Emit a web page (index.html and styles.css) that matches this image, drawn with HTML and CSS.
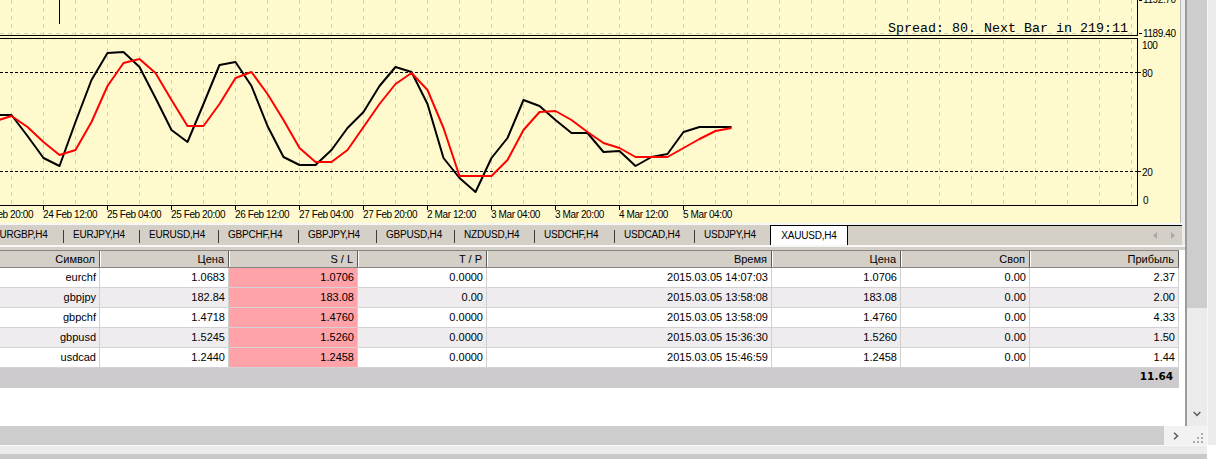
FILE: index.html
```html
<!DOCTYPE html>
<html>
<head>
<meta charset="utf-8">
<link rel="stylesheet" href="styles.css">
</head>
<body>
<div class="app">
  <div class="top">
    <div class="left">
      <div class="chart">
        <svg class="chart-svg" width="1180" height="223" viewBox="0 0 1180 223">
          <defs>
            <pattern id="vg" x="11" y="0" width="32" height="8" patternUnits="userSpaceOnUse">
              <rect x="0" y="0" width="1" height="4" fill="#d3d1c2"/>
            </pattern>
            <clipPath id="ind"><rect x="0" y="39" width="1137" height="166"/></clipPath>
          </defs>
          <rect x="0" y="0" width="1137" height="35" fill="url(#vg)"/>
          <rect x="0" y="39" width="1137" height="166" fill="url(#vg)"/>
          <path d="M0 33.5H1137" stroke="#d3d1c2" stroke-dasharray="4 4" shape-rendering="crispEdges"/>
          <path d="M59.5 0V24" stroke="#000" shape-rendering="crispEdges"/>
          <path d="M0 35.5H1137.5V0" stroke="#000" fill="none" shape-rendering="crispEdges"/>
          <path d="M0 38.5H1137.5V205.5H0" stroke="#000" fill="none" shape-rendering="crispEdges"/>
          <path d="M0 72.5H1137M0 171.5H1137" stroke="#000" stroke-dasharray="3 2" shape-rendering="crispEdges"/>
          <path d="M1138 72.5h3M1138 171.5h3M1139 33.5h3M1139 0.5h3" stroke="#000" shape-rendering="crispEdges"/>
          <path d="M43.5 206v4M107.5 206v4M171.5 206v4M235.5 206v4M299.5 206v4M363.5 206v4M427.5 206v4M491.5 206v4M555.5 206v4M619.5 206v4M683.5 206v4" stroke="#000" shape-rendering="crispEdges"/>
          <g clip-path="url(#ind)" fill="none" stroke-width="2" stroke-linejoin="round">
            <polyline stroke="#000" points="-4.5,115 11.5,115 27.5,136 43.5,158 59.5,166 75.5,122 91.5,80 107.5,53 123.5,52 139.5,67 155.5,98 171.5,130 187.5,142 203.5,104 219.5,65 235.5,62 251.5,86 267.5,126 283.5,157 299.5,165 315.5,165 331.5,150 347.5,128 363.5,112 379.5,86 395.5,67 411.5,72 427.5,104 443.5,158 459.5,178 475.5,192 491.5,158 507.5,138 523.5,100 539.5,106 555.5,120 571.5,133 587.5,133 603.5,152 619.5,151 635.5,166 651.5,157 667.5,154 683.5,132 699.5,127 715.5,127 731.5,127"/>
            <polyline stroke="#ff0000" points="-4.5,121 11.5,116 27.5,127 43.5,142 59.5,155 75.5,150 91.5,122 107.5,86 123.5,63 139.5,59 155.5,73 171.5,100 187.5,126 203.5,126 219.5,104 235.5,78 251.5,72 267.5,94 283.5,120 299.5,148 315.5,162 331.5,162 347.5,150 363.5,127 379.5,104 395.5,84 411.5,73 427.5,90 443.5,128 459.5,176 475.5,176 491.5,176 507.5,160 523.5,130 539.5,112 555.5,111 571.5,120 587.5,132 603.5,143 619.5,148 635.5,157 651.5,157 667.5,157 683.5,148 699.5,139 715.5,131 731.5,128"/>
          </g>
          <text class="spread" x="1128" y="32" text-anchor="end">Spread: 80. Next Bar in 219:11</text>
          <text class="ax" x="1143" y="3">1192.70</text>
          <text class="ax" x="1143" y="37">1189.40</text>
          <text class="ax" x="1142" y="49">100</text>
          <text class="ax" x="1142" y="77">80</text>
          <text class="ax" x="1142" y="176">20</text>
          <text class="ax" x="1143" y="204">0</text>
          <text class="ax" x="-21" y="218">23 Feb 20:00</text>
          <text class="ax" x="43" y="218">24 Feb 12:00</text>
          <text class="ax" x="107" y="218">25 Feb 04:00</text>
          <text class="ax" x="171" y="218">25 Feb 20:00</text>
          <text class="ax" x="235" y="218">26 Feb 12:00</text>
          <text class="ax" x="299" y="218">27 Feb 04:00</text>
          <text class="ax" x="363" y="218">27 Feb 20:00</text>
          <text class="ax" x="427" y="218">2 Mar 12:00</text>
          <text class="ax" x="491" y="218">3 Mar 04:00</text>
          <text class="ax" x="555" y="218">3 Mar 20:00</text>
          <text class="ax" x="619" y="218">4 Mar 12:00</text>
          <text class="ax" x="683" y="218">5 Mar 04:00</text>
        </svg>
      </div>
      <div class="band-light"></div>
      <div class="tabbar">
        <div class="tab tab-first w79">EURGBP,H4</div><span class="sep"></span>
        <div class="tab w75">EURJPY,H4</div><span class="sep"></span>
        <div class="tab w78">EURUSD,H4</div><span class="sep"></span>
        <div class="tab w79">GBPCHF,H4</div><span class="sep"></span>
        <div class="tab w77">GBPJPY,H4</div><span class="sep"></span>
        <div class="tab w77">GBPUSD,H4</div><span class="sep"></span>
        <div class="tab w79">NZDUSD,H4</div><span class="sep"></span>
        <div class="tab w79">USDCHF,H4</div><span class="sep"></span>
        <div class="tab w79">USDCAD,H4</div><span class="sep"></span>
        <div class="tab w75">USDJPY,H4</div>
        <div class="tab tab-active">XAUUSD,H4</div>
        <div class="tab-fill">
          <svg width="4" height="7" viewBox="0 0 4 7"><path d="M4 0V7L0 3.5Z" fill="#a9a9a9"/></svg>
          <svg width="4" height="7" viewBox="0 0 4 7"><path d="M0 0V7L4 3.5Z" fill="#a9a9a9"/></svg>
        </div>
      </div>
      <div class="band-under"></div>
      <div class="panel">
        <div class="row thead">
          <div class="th">Символ</div><div class="th">Цена</div><div class="th">S / L</div><div class="th">T / P</div><div class="th">Время</div><div class="th">Цена</div><div class="th">Своп</div><div class="th">Прибыль</div>
        </div>
        <div class="row tr">
          <div class="td">eurchf</div><div class="td">1.0683</div><div class="td sl">1.0706</div><div class="td">0.0000</div><div class="td">2015.03.05 14:07:03</div><div class="td">1.0706</div><div class="td">0.00</div><div class="td">2.37</div>
        </div>
        <div class="row tr alt">
          <div class="td">gbpjpy</div><div class="td">182.84</div><div class="td sl">183.08</div><div class="td">0.00</div><div class="td">2015.03.05 13:58:08</div><div class="td">183.08</div><div class="td">0.00</div><div class="td">2.00</div>
        </div>
        <div class="row tr">
          <div class="td">gbpchf</div><div class="td">1.4718</div><div class="td sl">1.4760</div><div class="td">0.0000</div><div class="td">2015.03.05 13:58:09</div><div class="td">1.4760</div><div class="td">0.00</div><div class="td">4.33</div>
        </div>
        <div class="row tr alt">
          <div class="td">gbpusd</div><div class="td">1.5245</div><div class="td sl">1.5260</div><div class="td">0.0000</div><div class="td">2015.03.05 15:36:30</div><div class="td">1.5260</div><div class="td">0.00</div><div class="td">1.50</div>
        </div>
        <div class="row tr">
          <div class="td">usdcad</div><div class="td">1.2440</div><div class="td sl">1.2458</div><div class="td">0.0000</div><div class="td">2015.03.05 15:46:59</div><div class="td">1.2458</div><div class="td">0.00</div><div class="td">1.44</div>
        </div>
        <div class="total">11.64</div>
      </div>
    </div>
    <div class="vscroll">
      <div class="thumb"></div>
      <div class="track">
        <svg width="8" height="6" viewBox="0 0 8 6"><path d="M0.7 1L4 4.5L7.3 1" stroke="#5a5a5a" stroke-width="1.5" fill="none"/></svg>
      </div>
    </div>
    <div class="edge"></div>
  </div>
  <div class="bottom">
    <div class="hbar">
      <div class="hscroll"></div>
      <div class="harrow">
        <svg width="6" height="8" viewBox="0 0 6 8"><path d="M1 0.7L4.5 4L1 7.3" stroke="#5a5a5a" stroke-width="1.5" fill="none"/></svg>
      </div>
      <div class="grip">
        <svg width="20" height="19" viewBox="0 0 20 19"><path d="M14 7h2v2h-2zM10 11h2v2h-2zM14 11h2v2h-2zM6 15h2v2h-2zM10 15h2v2h-2zM14 15h2v2h-2z" fill="#acacac"/></svg>
      </div>
      <div class="edge"></div>
    </div>
    <div class="strip"></div>
  </div>
</div>
</body>
</html>
```

FILE: styles.css
```css
* { box-sizing: border-box; }
html, body { margin: 0; padding: 0; }
body {
  width: 1216px;
  height: 464px;
  overflow: hidden;
  background: #ffffff;
  font-family: "Liberation Sans", Arial, sans-serif;
  font-size: 11px;
  color: #000;
}
.app { display: flex; flex-direction: column; width: 1216px; height: 464px; }
.top { display: flex; height: 426px; }
.left {
  width: 1187px;
  border-right: 2px solid #9b9b9b;
  background: #ececec;
  display: flex;
  flex-direction: column;
}
.chart {
  width: 1181px;
  height: 223px;
  background: #fffacd;
  border-right: 1px solid #b9b9b9;
}
.chart-svg { display: block; overflow: hidden; }
.spread { font-family: "Liberation Mono", "Courier New", monospace; font-size: 13.33px; fill: #000; }
.ax { font-family: "Liberation Sans", Arial, sans-serif; font-size: 10px; letter-spacing: -0.4px; fill: #000; }

.band-light { height: 2px; width: 1182px; background: #f6f6f6; }
.tabbar {
  height: 20px;
  width: 1182px;
  background: #d4d0c8;
  display: flex;
  align-items: flex-start;
  overflow: hidden;
}
.tab {
  flex: none;
  height: 20px;
  line-height: 20px;
  padding-left: 9px;
  font-size: 10px;
  letter-spacing: -0.2px;
  white-space: nowrap;
  overflow: hidden;
}
.tab-first { margin-left: -16px; }
.w75 { width: 75px; }
.w77 { width: 77px; }
.w78 { width: 78px; }
.w79 { width: 79px; }
.sep { flex: none; width: 1px; height: 13px; margin-top: 5px; background: #3c3c3c; }
.tab-active {
  width: 78px;
  background: #fff;
  border: 1px solid #000;
  border-bottom: none;
  padding: 0;
  text-align: center;
  line-height: 19px;
}
.tab-fill {
  flex: 1;
  height: 20px;
  border-top: 1px solid #000;
  display: flex;
  justify-content: flex-end;
  align-items: center;
  gap: 14px;
  padding-right: 7px;
}
.tab-fill svg { display: block; }
.band-under { height: 5px; width: 1185px; background: #d4d0c8; border-top: 2px solid #f7f7f7; }

.panel { flex: 1; background: #fff; }
.row {
  display: grid;
  grid-template-columns: 100px 129px 129px 129px 285px 129px 129px 149px;
  width: 1179px;
}
.thead { height: 18px; border-top: 1px solid #858585; border-bottom: 1px solid #858585; }
.th {
  background: #d4d0c8;
  border-left: 1px solid #fff;
  border-right: 1px solid #5a5a5a;
  text-align: right;
  padding: 1px 4px 0 0;
  line-height: 15px;
  white-space: nowrap;
}
.th:first-child { border-left: none; }
.tr { height: 20px; border-bottom: 1px solid #d5d2d5; }
.tr.alt { background: #efecf0; }
.td {
  border-right: 1px solid #d0d0d0;
  text-align: right;
  padding-right: 3px;
  line-height: 19px;
  white-space: nowrap;
}
.td.sl { background: #ffa3a8; }
.total {
  width: 1179px;
  height: 20px;
  background: #cdcbce;
  text-align: right;
  padding: 0 6px 4px 0;
  font-family: "DejaVu Sans", sans-serif;
  font-weight: bold;
  font-size: 10.5px;
  line-height: 16px;
}

.vscroll { width: 20px; display: flex; flex-direction: column; }
.thumb { height: 308px; background: #cdcdcd; }
.track {
  flex: 1;
  background: #ebebeb;
  display: flex;
  flex-direction: column;
  justify-content: flex-end;
  align-items: center;
  padding-bottom: 9px;
}
.track svg { display: block; }
.edge { width: 9px; background: #ebebeb; border-left: 1px solid #f7f7f7; }

.bottom { height: 38px; display: flex; flex-direction: column; }
.hbar { height: 19px; display: flex; }
.hscroll { width: 1164px; background: #cdcdcd; }
.harrow {
  width: 23px;
  background: #f2f2f2;
  display: flex;
  align-items: center;
  justify-content: center;
}
.harrow svg, .grip svg { display: block; }
.grip { width: 20px; background: #f2f2f2; }
.strip {
  height: 14px;
  width: 1207px;
  background: #ebebeb;
  border-top: 1px solid #f8f8f8;
  border-bottom: 5px solid #c9c9c9;
}
```
